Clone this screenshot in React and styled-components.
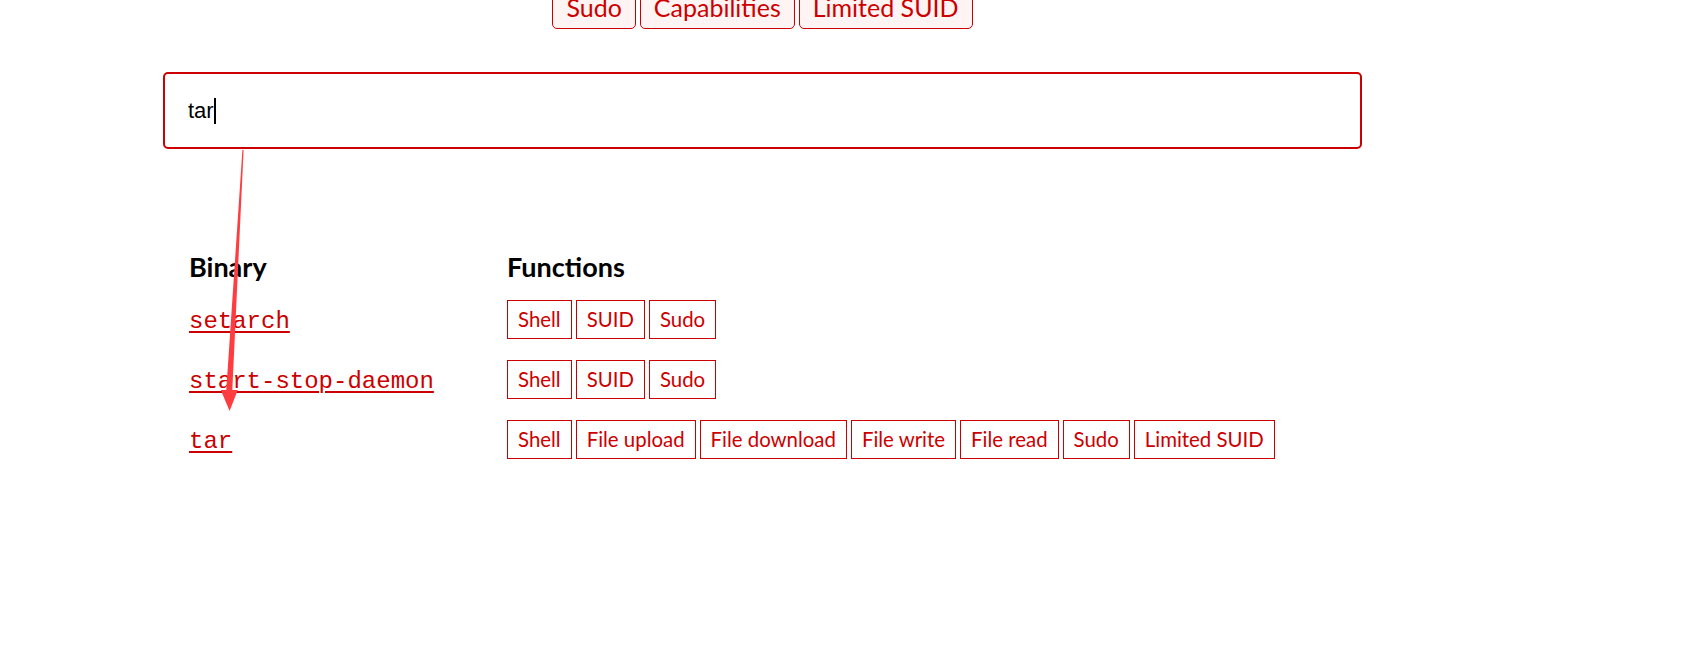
import React from 'react';
import styled, { createGlobalStyle } from 'styled-components';

const filters = ['Sudo', 'Capabilities', 'Limited SUID'];

const binaries = [
  { name: 'setarch', functions: ['Shell', 'SUID', 'Sudo'] },
  { name: 'start-stop-daemon', functions: ['Shell', 'SUID', 'Sudo'] },
  {
    name: 'tar',
    functions: ['Shell', 'File upload', 'File download', 'File write', 'File read', 'Sudo', 'Limited SUID'],
  },
];

const App = () => {
  return (
    <>
      <GlobalStyle />
      <Page>
        <FilterBar>
          {filters.map((f) => (
            <FilterPill key={f}>{f}</FilterPill>
          ))}
        </FilterBar>

        <SearchField role="textbox" aria-label="Search">
          tar
          <Caret />
        </SearchField>

        <BinTable>
          <HeadCell>Binary</HeadCell>
          <HeadCell>Functions</HeadCell>
          {binaries.map((b) => (
            <React.Fragment key={b.name}>
              <NameCell>
                <BinLink href="#">{b.name}</BinLink>
              </NameCell>
              <FuncCell>
                {b.functions.map((fn) => (
                  <FuncTag key={fn}>{fn}</FuncTag>
                ))}
              </FuncCell>
            </React.Fragment>
          ))}
        </BinTable>

        {/* red annotation arrow drawn over the page */}
        <Arrow width="300" height="430" viewBox="0 0 300 430">
          <polygon
            points="242.4,150 243.6,150 232.3,390 237.8,390 229.6,411 220.8,390 226.3,390"
            fill="#ff3c3f"
          />
        </Arrow>
      </Page>
    </>
  );
};

const GlobalStyle = createGlobalStyle`
  body {
    margin: 0;
    background: #ffffff;
    font-family: Lato, "Open Sans", sans-serif;
    overflow: hidden;
  }
`;

const Page = styled.div`
  position: relative;
  display: flex;
  flex-direction: column;
  width: 1199px;
  padding-left: 163px;
`;

const FilterBar = styled.div`
  display: flex;
  justify-content: center;
  gap: 4px;
  margin-top: -12px;
`;

const FilterPill = styled.span`
  box-sizing: border-box;
  height: 41px;
  line-height: 37px;
  padding: 0 13px;
  font-size: 25px;
  color: #cc0000;
  background: #fff4f4;
  border: 1px solid #cc0000;
  border-radius: 5px;
`;

const SearchField = styled.div`
  box-sizing: border-box;
  display: flex;
  align-items: center;
  margin-top: 43px;
  width: 100%;
  height: 77px;
  padding: 0 22px 0 23px;
  border: 2px solid #cc0000;
  border-radius: 5px;
  font-family: "Liberation Sans", Arial, sans-serif;
  font-size: 22px;
  color: #000;
`;

const Caret = styled.span`
  display: inline-block;
  width: 2px;
  height: 26px;
  background: #000;
`;

const BinTable = styled.div`
  display: grid;
  grid-template-columns: 318px 1fr;
  grid-template-rows: 42px repeat(3, 60px);
  align-items: center;
  margin: 98px 0 0 26px;
`;

const HeadCell = styled.div`
  align-self: start;
  line-height: 40px;
  font-size: 27px;
  font-weight: 700;
  color: #000;
`;

const NameCell = styled.div`
  display: flex;
  align-items: center;
  padding-top: 5px;
`;

const BinLink = styled.a`
  font-family: "Liberation Mono", "Courier New", monospace;
  font-size: 24px;
  color: #cc0000;
  text-decoration: underline;
  text-decoration-thickness: 2px;
  text-underline-offset: 3px;
`;

const FuncCell = styled.div`
  display: flex;
  flex-wrap: wrap;
  gap: 4px;
`;

const FuncTag = styled.span`
  box-sizing: border-box;
  height: 39px;
  line-height: 37px;
  padding: 0 10px;
  font-size: 20.4px;
  color: #cc0000;
  border: 1px solid #cc0000;
`;

const Arrow = styled.svg`
  position: absolute;
  left: 0;
  top: 0;
  pointer-events: none;
`;

export default App;
